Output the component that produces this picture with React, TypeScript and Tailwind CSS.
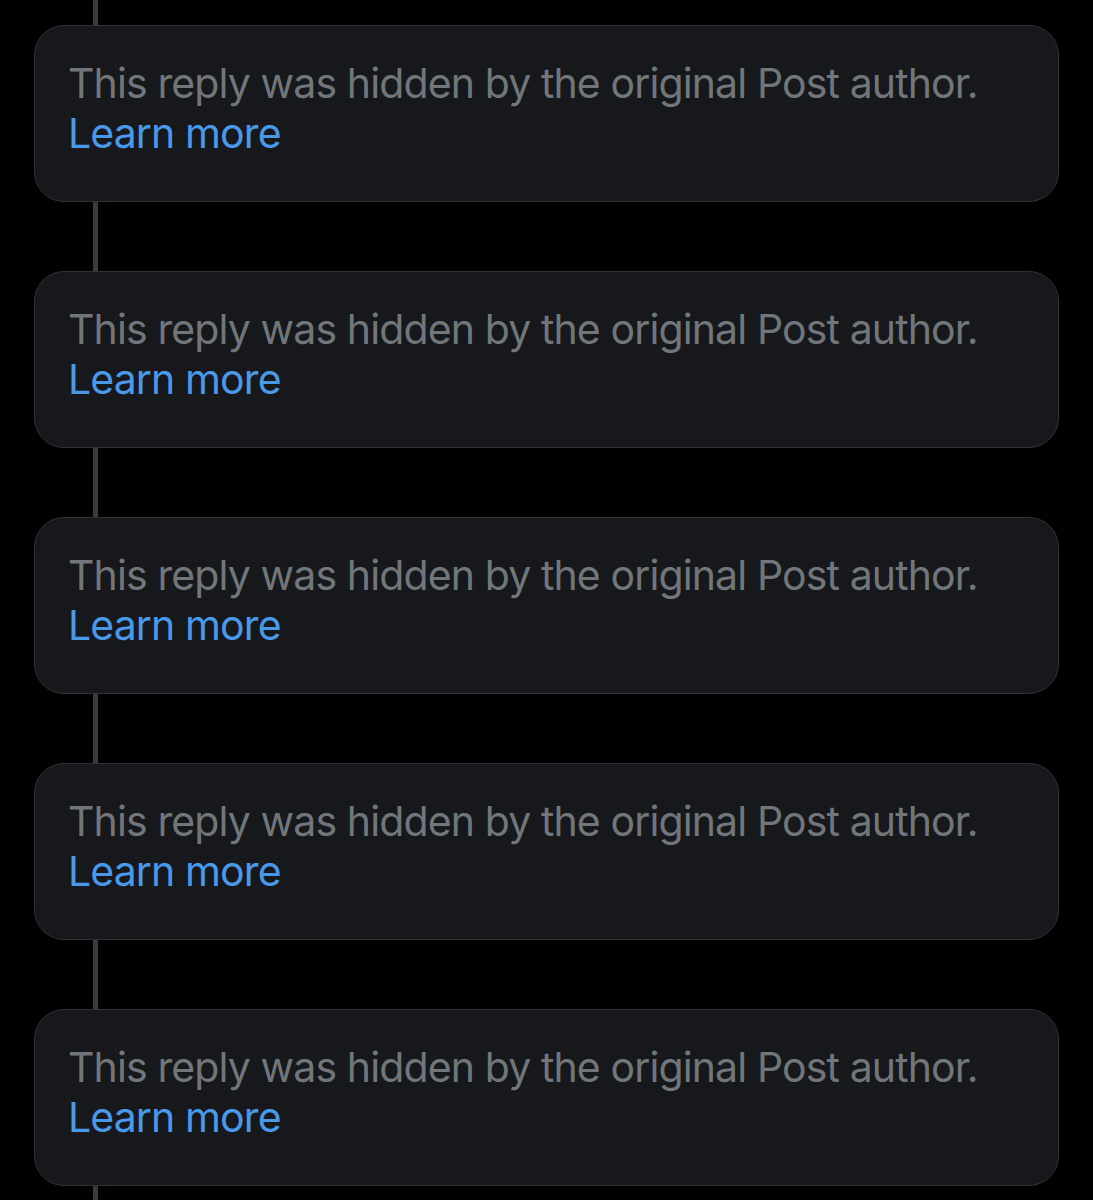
import React from "react";

function Card() {
  return (
    <div className="h-[177px] rounded-[30px] border border-[#2f3336] bg-[#16181c] pl-[33px] pr-4 pt-[32px]">
      <p className="text-[41px] leading-[50px] text-[#71767b] tracking-[-0.88px] whitespace-nowrap" style={{ fontFamily: "Inter, 'Noto Sans', sans-serif" }}>
        This reply was hidden by the original Post author.
        <br />
        <span className="text-[#4a99e9]">Learn more</span>
      </p>
    </div>
  );
}

export default function App() {
  return (
    <div className="relative min-h-[1200px] w-[1093px] bg-black overflow-hidden">
      <div className="absolute left-[93px] top-0 h-[1200px] w-[5px] bg-[#3a3b3e]" />
      <div className="relative flex flex-col gap-[69px] pl-[34px] pr-[34px] pt-[25px]">
        <Card />
        <Card />
        <Card />
        <Card />
        <Card />
      </div>
    </div>
  );
}
